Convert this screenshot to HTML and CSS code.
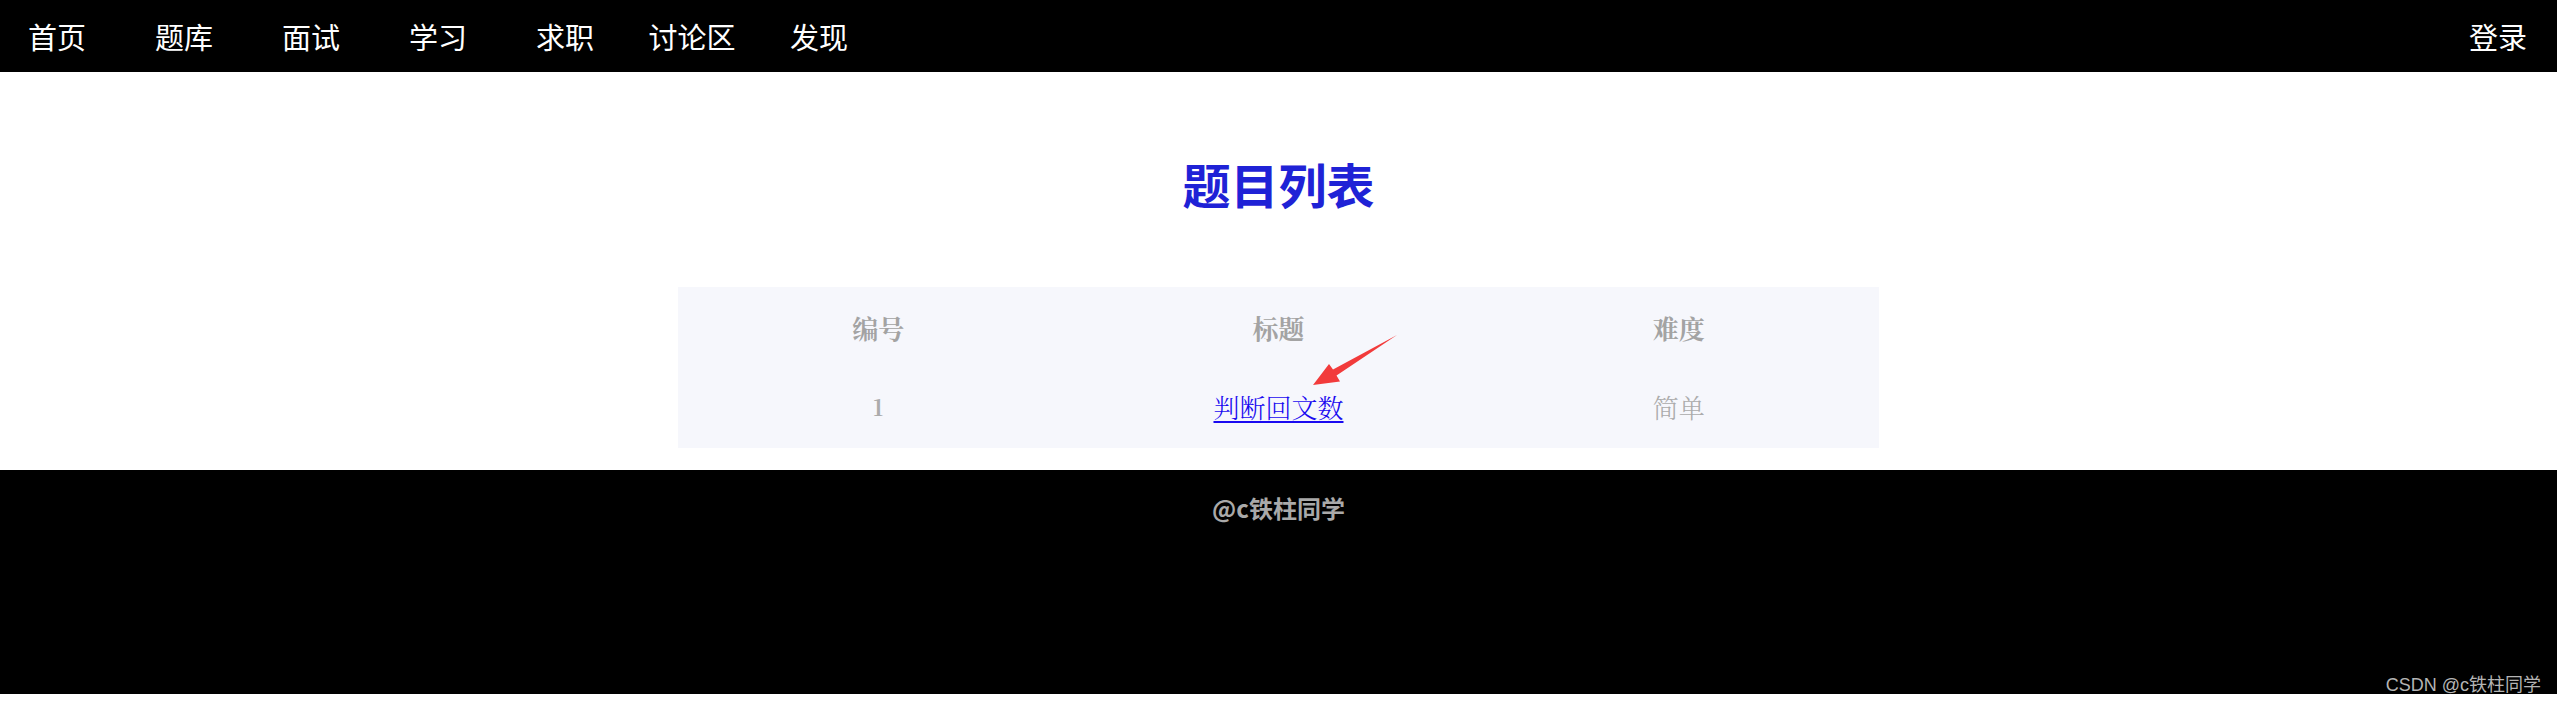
FILE: index.html
```html
<!DOCTYPE html>
<html lang="zh-CN">
<head>
<meta charset="utf-8">
<title>题目列表</title>
<link rel="stylesheet" href="styles.css">
</head>
<body>
<header class="topbar">
  <nav class="nav">
    <a class="nav-item" href="#">首页</a>
    <a class="nav-item" href="#">题库</a>
    <a class="nav-item" href="#">面试</a>
    <a class="nav-item" href="#">学习</a>
    <a class="nav-item" href="#">求职</a>
    <a class="nav-item" href="#">讨论区</a>
    <a class="nav-item" href="#">发现</a>
  </nav>
  <a class="nav-item login" href="#">登录</a>
</header>
<main class="content">
  <h1 class="page-title">题目列表</h1>
  <div class="table-wrap">
    <table class="qtable">
      <thead>
        <tr><th>编号</th><th>标题</th><th>难度</th></tr>
      </thead>
      <tbody>
        <tr><td class="num">1</td><td><a class="qlink" href="#">判断回文数</a></td><td>简单</td></tr>
      </tbody>
    </table>
    <svg class="arrow" width="110" height="70" viewBox="0 0 110 70">
      <polygon points="97,10 36.5,50.5 40,56.5 13,60 29,39 33,44.5" fill="#f23b3b"/>
    </svg>
  </div>
</main>
<footer class="footer">
  <div class="footer-text">@c铁柱同学</div>
</footer>
<div class="watermark">CSDN @c铁柱同学</div>
</body>
</html>
```

FILE: styles.css
```css
html, body {
  margin: 0;
  padding: 0;
  background: #ffffff;
}
body {
  position: relative;
  height: 707px;
  overflow: hidden;
  font-family: "Noto Sans CJK SC", "Noto Sans", sans-serif;
}
.topbar {
  height: 72px;
  background: #000000;
  display: flex;
  align-items: center;
  justify-content: space-between;
}
.nav {
  display: flex;
  gap: 13px;
}
.nav-item {
  width: 114px;
  text-align: center;
  color: #ffffff;
  text-decoration: none;
  font-size: 29px;
  line-height: 72px;
}
.login {
  margin-right: 2px;
}
.content {
  padding-top: 82px;
}
.page-title {
  margin: 0;
  text-align: center;
  font-size: 48px;
  line-height: 58px;
  font-weight: 700;
  color: #1f22d6;
}
.table-wrap {
  position: relative;
  width: 1201px;
  margin: 75px auto 0;
}
.qtable {
  width: 100%;
  table-layout: fixed;
  border-collapse: collapse;
  background: #f6f7fc;
  font-family: "Noto Serif CJK SC", "Liberation Serif", "Noto Sans CJK SC", serif;
  font-size: 26px;
}
.qtable th {
  height: 80px;
  padding: 0;
  font-weight: 700;
  color: #a3a3a3;
  text-align: center;
  vertical-align: middle;
}
.qtable td {
  height: 78px;
  padding: 0 0 3px;
  color: #ababab;
  text-align: center;
  vertical-align: middle;
  font-weight: 300;
}
.qtable td.num {
  font-weight: 700;
  font-size: 22px;
}
.qlink {
  color: #1a0af0;
  text-decoration: underline;
  text-decoration-thickness: 2px;
  text-underline-offset: 3px;
}
.arrow {
  position: absolute;
  left: 622px;
  top: 38px;
}
.footer {
  margin-top: 22px;
  height: 224px;
  background: #000000;
  padding-top: 22px;
  box-sizing: border-box;
}
.footer-text {
  text-align: center;
  color: #a9a9a9;
  font-size: 24px;
  font-weight: 700;
  line-height: 32px;
}
.watermark {
  position: absolute;
  right: 16px;
  bottom: 12px;
  color: #b4b4b4;
  font-family: "Liberation Sans", "Noto Sans CJK SC", sans-serif;
  font-size: 18px;
  line-height: 20px;
}
```
